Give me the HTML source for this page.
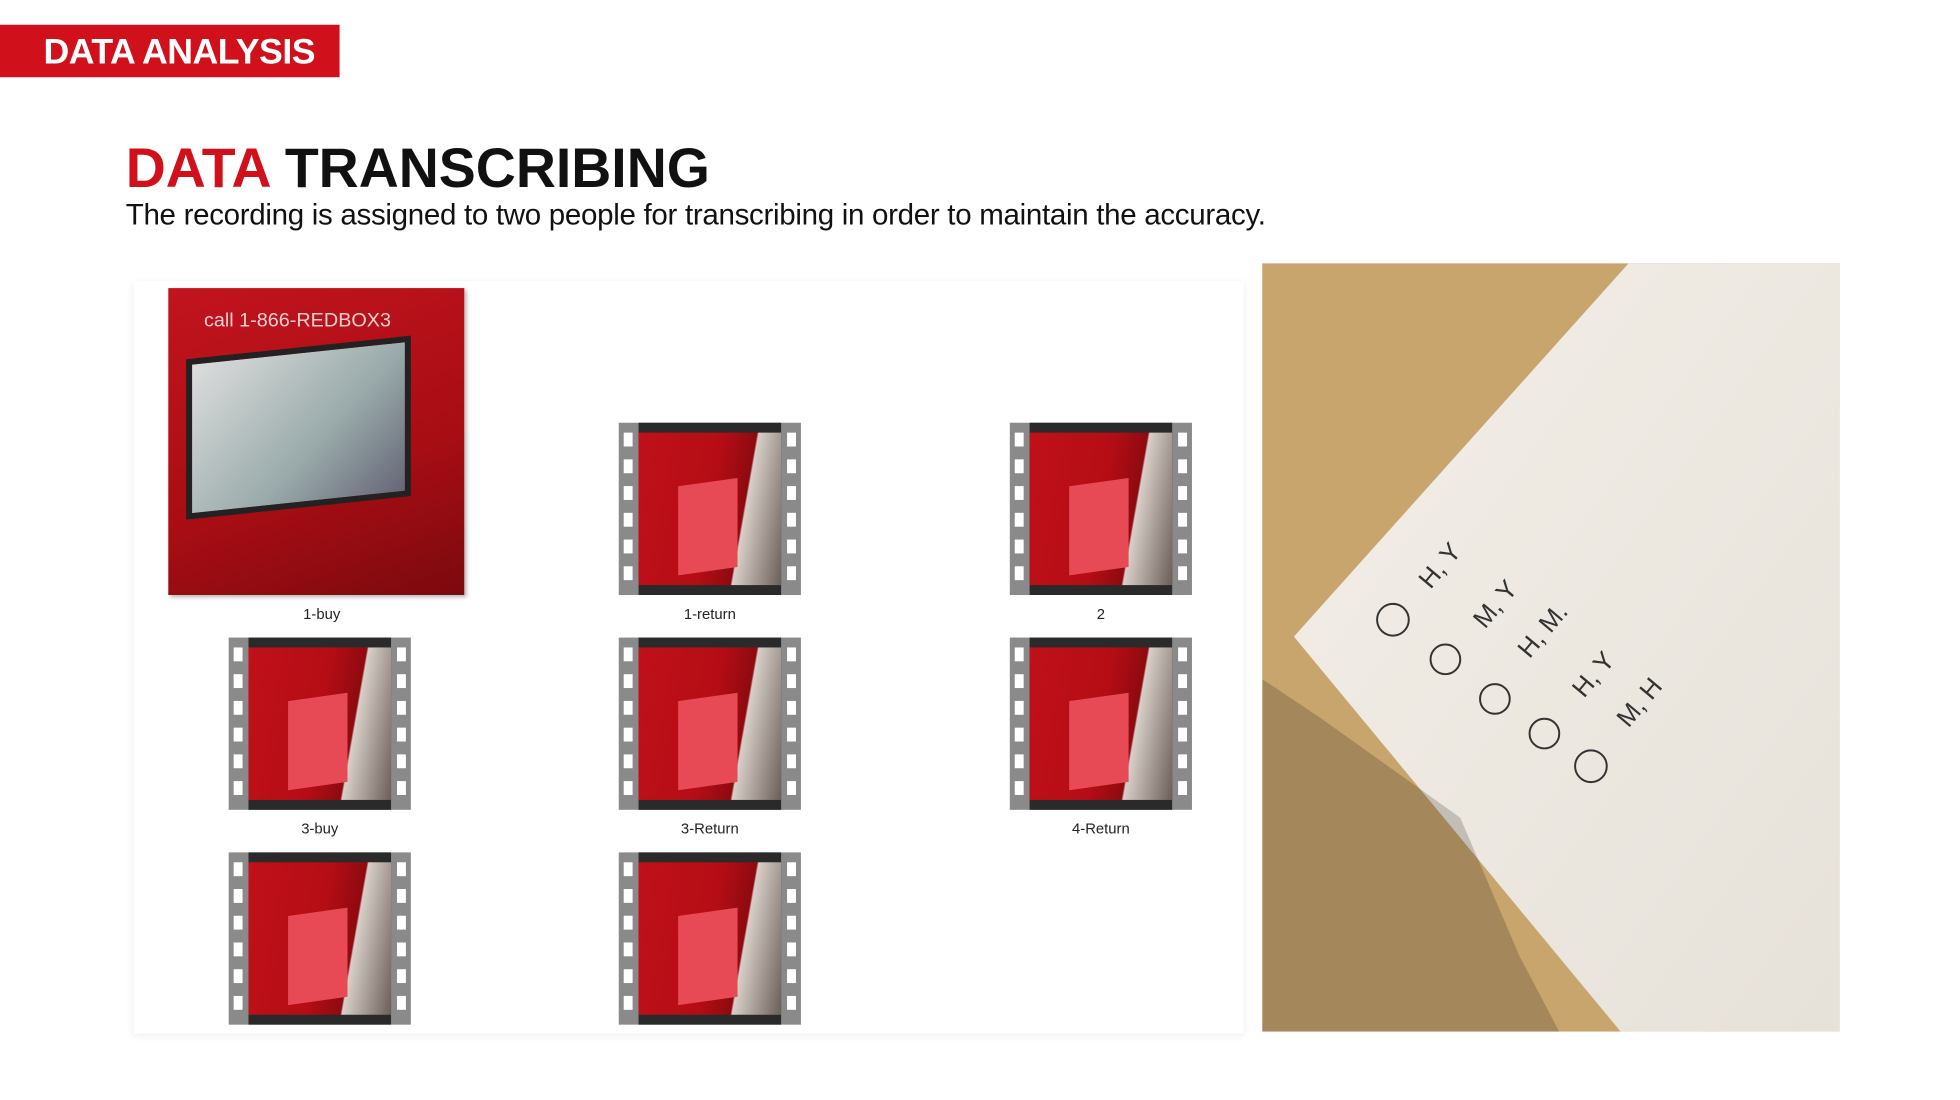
<!DOCTYPE html>
<html><head><meta charset="utf-8"><style>
body{margin:0;width:1960px;height:1100px;background:#fff;position:relative;overflow:hidden;font-family:"Liberation Sans",sans-serif}
#w{position:absolute;left:0;top:0;width:1980px;height:1111px;transform:scale(0.99);transform-origin:0 0}
.tag{position:absolute;left:0;top:25px;width:343px;height:53px;background:#d0111b;color:#fff;font-weight:bold;font-size:36px;line-height:53px;padding-left:44px;box-sizing:border-box;letter-spacing:-0.5px}
h1{position:absolute;left:127px;top:137px;margin:0;font-size:56px;font-weight:bold;color:#111}
h1 span{color:#d0111b}
.sub{position:absolute;left:127px;top:201px;font-size:29.8px;color:#111;letter-spacing:-0.3px}
.panel{position:absolute;left:135px;top:284px;width:1121px;height:760px;background:#fff;box-shadow:0 2px 8px rgba(0,0,0,0.08)}
.film{position:absolute;width:184px;height:174px;background:#8a8a8a}
.film .in{position:absolute;left:20px;right:20px;top:0;bottom:0;background:#2a2a2a}
.film .pic{position:absolute;left:20px;right:20px;top:10px;bottom:10px;background:linear-gradient(100deg,#c0101a 0%,#b50d15 50%,#8e0a10 70%,#d8cfc8 71%,#6a5f58 100%)}
.film .scr{position:absolute;left:40px;top:50px;width:60px;height:90px;background:#e84a55;transform:skewY(-8deg)}
.film .h{position:absolute;width:9px;height:14px;background:#fff}
.lbl{position:absolute;font-size:15px;color:#222;text-align:center;width:184px}
.photo{position:absolute;left:1275px;top:266px;width:583px;height:776px;background:#c9a56e;overflow:hidden}
</style></head><body><div id="w">
<div class="tag">DATA ANALYSIS</div>
<h1><span>DATA</span> TRANSCRIBING</h1>
<div class="sub">The recording is assigned to two people for transcribing in order to maintain the accuracy.</div>
<div class="panel"></div>
<div style="position:absolute;left:170px;top:291px;width:299px;height:310px;background:linear-gradient(160deg,#c2141e,#a80d14 60%,#7a0a0e);box-shadow:2px 2px 4px rgba(0,0,0,.3)">
<div style="position:absolute;left:18px;top:60px;width:215px;height:150px;background:linear-gradient(135deg,#ddd,#9aa 60%,#667);transform:skewY(-6deg);border:6px solid #222"></div>
<div style="position:absolute;left:36px;top:22px;color:#f4d0d0;font-size:20px">call 1-866-REDBOX3</div>
</div>
<div class="lbl" style="left:233px;top:612px">1-buy</div>
<div id="films"></div>
<div class="photo">
<svg width="583" height="776" style="position:absolute;left:0;top:0">
<defs><linearGradient id="p" x1="0" y1="0" x2="1" y2="1"><stop offset="0" stop-color="#f3efe8"/><stop offset="1" stop-color="#e6e1d9"/></linearGradient></defs>
<polygon points="370,0 583,0 583,776 362,776 32,377" fill="url(#p)"/>
<polygon points="0,420 60,460 200,560 260,700 300,776 0,776" fill="#000" opacity="0.18"/>
<g font-family="Liberation Sans" font-size="26" fill="#333">
<text x="170" y="330" transform="rotate(-50 170 330)">H, Y</text>
<text x="225" y="370" transform="rotate(-50 225 370)">M, Y</text>
<text x="270" y="400" transform="rotate(-50 270 400)">H, M.</text>
<text x="325" y="440" transform="rotate(-50 325 440)">H, Y</text>
<text x="370" y="470" transform="rotate(-50 370 470)">M, H</text>
</g>
<g fill="none" stroke="#333" stroke-width="2"><circle cx="132" cy="360" r="16"/><circle cx="185" cy="400" r="15"/><circle cx="235" cy="440" r="15"/><circle cx="285" cy="475" r="15"/><circle cx="332" cy="508" r="16"/></g>
</svg>
</div>
</div>
<script>
var pos=[[625,427,"1-return"],[1020,427,"2"],[231,644,"3-buy"],[625,644,"3-Return"],[1020,644,"4-Return"],[231,861,""],[625,861,""]];
var h="";
pos.forEach(function(p){
 var s='<div class="film" style="left:'+p[0]+'px;top:'+p[1]+'px"><div class="in"></div><div class="pic"><div class="scr"></div></div>';
 for(var i=0;i<6;i++){var y=10+i*27;s+='<div class="h" style="left:5px;top:'+y+'px"></div><div class="h" style="right:5px;top:'+y+'px"></div>';}
 s+='</div>';
 if(p[2])s+='<div class="lbl" style="left:'+p[0]+'px;top:'+(p[1]+185)+'px">'+p[2]+'</div>';
 h+=s;
});
document.getElementById("films").innerHTML=h;
</script>
</body></html>
